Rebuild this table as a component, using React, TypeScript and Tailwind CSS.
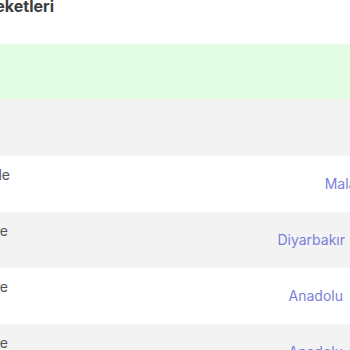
const ROWS = [
  { name: "Emre Temizle", branch: "Malatya", bg: "bg-white", cut: "-ml-[140px]", shift: "-mr-[27px]" },
  { name: "Ayşe Kaya Şube", branch: "Diyarbakır", bg: "bg-[#f3f3f3]", cut: "-ml-[142px]", shift: "mr-[5px]" },
  { name: "Merkez Şube", branch: "Anadolu", bg: "bg-white", cut: "-ml-[142px]", shift: "mr-[7px]" },
  { name: "Merkez Şube", branch: "Anadolu", bg: "bg-[#f3f3f3]", cut: "-ml-[142px]", shift: "mr-[7px]" },
];

export default function App() {
  return (
    <div className="w-[350px] h-[350px] overflow-hidden bg-white font-['Inter',sans-serif]">
      <div className="h-[44px] flex flex-col">
        <h2 className="w-[200px] -ml-[146px] -mt-[4px] text-right text-[16px] leading-[20px] font-bold text-[#3d3d3d] whitespace-nowrap">
          Hesap Hareketleri
        </h2>
      </div>
      <div className="h-[55px] bg-[#e2fde4]" />
      <div className="h-[57px] bg-[#f3f3f3]" />
      {ROWS.map((row, i) => (
        <div key={i} className={`flex h-[56px] ${row.bg}`}>
          <div className={`w-[150px] ${row.cut} shrink-0 pt-[9px] text-right text-[14px] leading-[20px] text-[#555] whitespace-nowrap`}>
            {row.name}
          </div>
          <div className={`flex-1 flex items-center justify-end ${row.shift} text-[14px] leading-[20px] text-[#7b7fdc] whitespace-nowrap`}>
            {row.branch}
          </div>
        </div>
      ))}
    </div>
  );
}
